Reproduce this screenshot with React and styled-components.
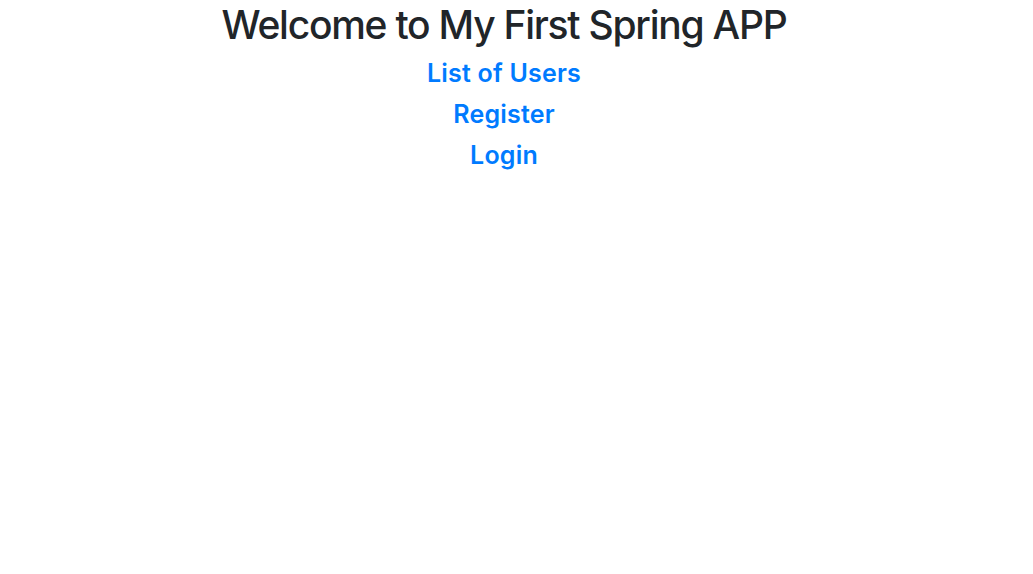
import React from 'react';
import styled, { createGlobalStyle } from 'styled-components';

const GlobalStyle = createGlobalStyle`
    body {
        margin: 0;
        background: #fff;
        font-family: Inter, "Liberation Sans", sans-serif;
        color: #212529;
    }
`;

const links = ['List of Users', 'Register', 'Login'];

const App = () => {
    return (
        <>
            <GlobalStyle />
            <Home>
                <Title>Welcome to My First Spring APP</Title>
                <Nav>
                    {links.map((label) => (
                        <NavLink key={label} href="#">{label}</NavLink>
                    ))}
                </Nav>
            </Home>
        </>
    );
};

const Home = styled.div`
    display: flex;
    flex-direction: column;
    align-items: center;
    margin-right: 25px;
    padding-top: 1px;
`;

const Title = styled.h1`
    margin: 0;
    font-size: 39px;
    font-weight: 500;
    line-height: 48px;
    letter-spacing: -1.25px;
    color: #212529;
`;

const Nav = styled.div`
    display: flex;
    flex-direction: column;
    align-items: center;
    margin-top: 4px;
`;

const NavLink = styled.a`
    font-size: 25px;
    font-weight: 600;
    line-height: 41px;
    letter-spacing: 0.2px;
    color: #007bff;
    text-decoration: none;
`;

export default App;
